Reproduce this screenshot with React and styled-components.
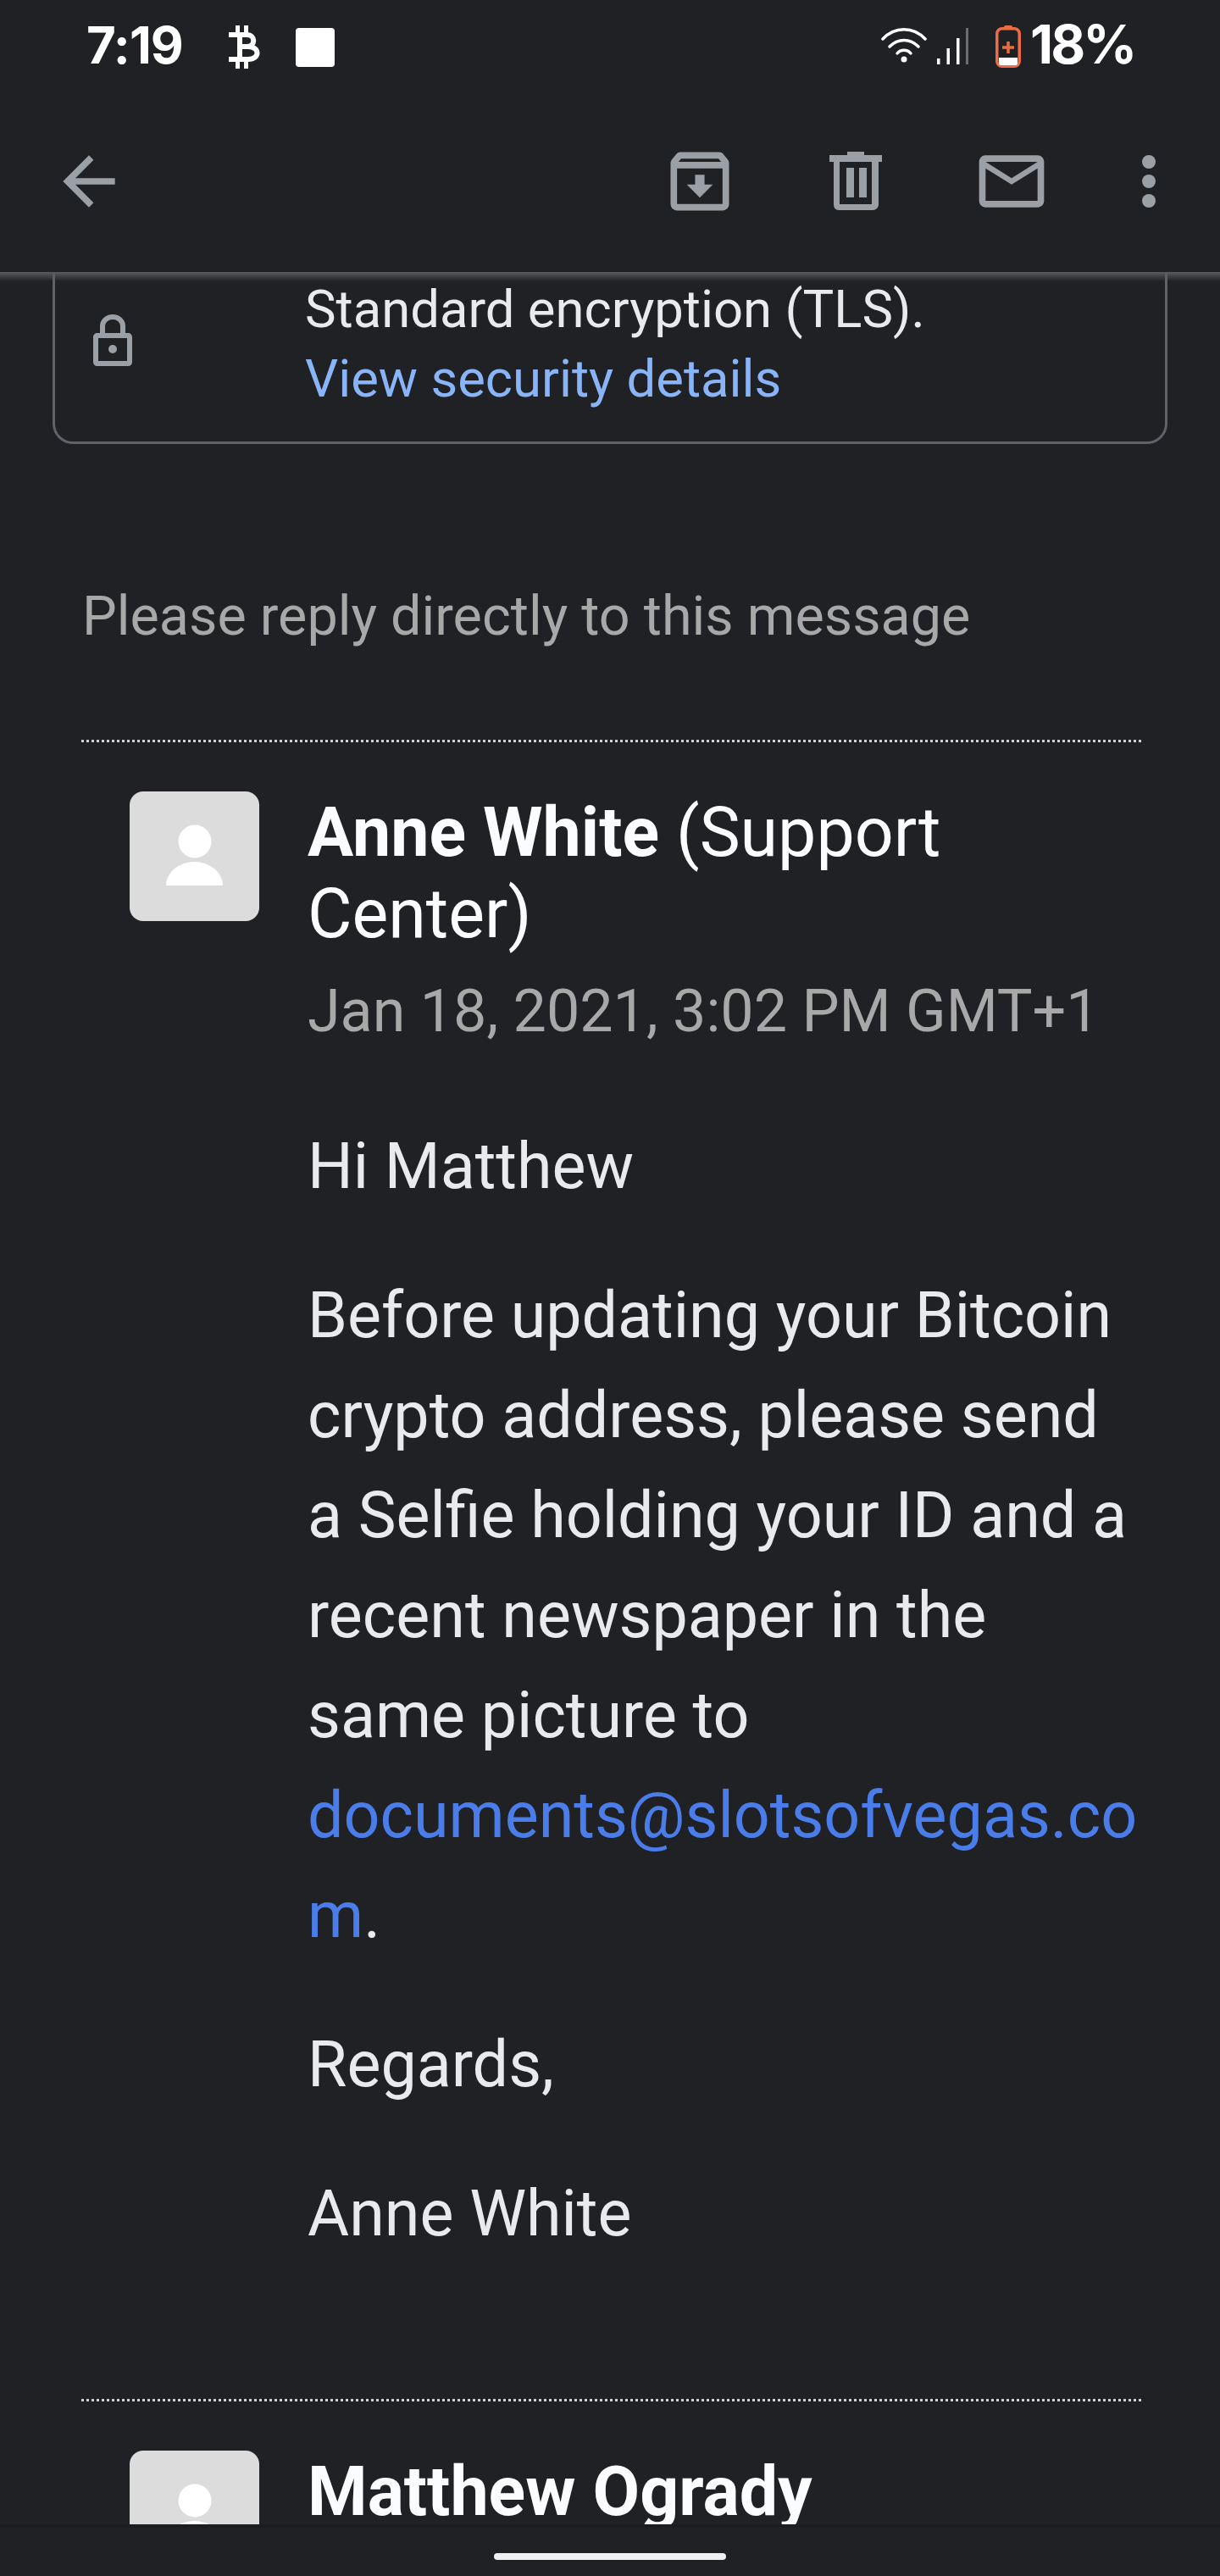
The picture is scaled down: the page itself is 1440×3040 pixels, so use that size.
import React from "react";
import styled, { createGlobalStyle } from "styled-components";

const GlobalStyle = createGlobalStyle`
  html, body {
    margin: 0;
    padding: 0;
    background: #202124;
  }
  * { box-sizing: border-box; }
`;

const Page = styled.div`
  width: 1440px;
  height: 3040px;
  display: flex;
  flex-direction: column;
  overflow: hidden;
  background: #202124;
  font-family: Roboto, "Liberation Sans", sans-serif;
`;

const StatusBar = styled.div`
  flex: none;
  height: 105px;
  padding: 0 103px 0 102px;
  display: flex;
  align-items: center;
  justify-content: space-between;
  color: #fff;
`;

const StatusGroup = styled.div`
  display: flex;
  align-items: center;
`;

const StatusText = styled.span`
  flex: none;
  width: ${(p) => p.$w}px;
  margin: 0 ${(p) => p.$after || 0}px 0 ${(p) => p.$before || 0}px;
  font-family: Inter, Roboto, sans-serif;
  font-size: ${(p) => p.$size}px;
  font-weight: 700;
  line-height: 1;
  letter-spacing: ${(p) => p.$track}px;
  white-space: nowrap;
`;

const StatusIcon = styled.svg`
  display: block;
  flex: none;
  margin: ${(p) => p.$drop || 0}px ${(p) => p.$after || 0}px 0 0;
`;

const StatusSquare = styled.span`
  width: 46px;
  height: 46px;
  margin-top: 7px;
  border-radius: 4px;
  background: #fff;
`;

const Toolbar = styled.div`
  flex: none;
  position: relative;
  height: 217px;
  padding: 0 60px 0 59px;
  display: flex;
  align-items: center;
  gap: 92px;
  color: #9aa0a6;

  &::after {
    content: "";
    position: absolute;
    left: 0;
    right: 0;
    top: calc(100% - 1px);
    height: 11px;
    background: linear-gradient(#5a5c60, rgba(32, 33, 36, 0));
  }
`;

const ToolIcon = styled.svg`
  display: block;
  flex: none;
  width: ${(p) => p.$w || 92}px;
  height: 92px;
  fill: currentColor;
  ${(p) => p.$push && "margin-right: auto;"}
`;

const Scroller = styled.main`
  flex: 1;
  min-height: 0;
  overflow: hidden;
`;

const SecurityBox = styled.section`
  height: 202px;
  margin: 0 62px;
  padding: 0 0 0 45px;
  display: flex;
  border: 3px solid #5f6368;
  border-top: 0;
  border-radius: 0 0 24px 24px;
`;

const LockIcon = styled.svg`
  flex: none;
  width: 46px;
  height: 61px;
  margin: 49px 204px 0 0;
`;

const SecurityText = styled.div`
  padding-top: 2px;
  font-size: 61.6px;
  line-height: 82px;
  color: #e8eaed;
`;

const SecurityLink = styled.div`
  color: #8ab4f8;
`;

const ReplyNote = styled.p`
  margin: 162px 0 0 97px;
  font-size: 64.7px;
  line-height: 82px;
  color: #a8a8a8;
`;

const Message = styled.article`
  margin: ${(p) => p.$top}px 92px 0 96px;
  padding: 61px 0 0 57px;
  display: flex;
  gap: 57px;
  background: repeating-linear-gradient(90deg, #d0d0d0 0 3px, transparent 3px 6px) top left / 100% 3px no-repeat;
`;

const Avatar = styled.svg`
  flex: none;
  display: block;
  width: 153px;
  height: 153px;
  border-radius: 16px;
  background: #dcdcdc;
`;

const MessageMain = styled.div`
  flex: 1;
  min-width: 0;
`;

const Sender = styled.div`
  padding-top: 1px;
  font-size: 80.7px;
  line-height: 96px;
  color: #fafcff;
`;

const SenderName = styled.strong`
  font-weight: 700;
`;

const Sent = styled.div`
  margin-top: 18px;
  font-size: 70px;
  line-height: 96px;
  color: #a8a8a8;
`;

const BodyBlock = styled.p`
  margin: ${(p) => p.$top || 58}px 0 0;
  font-size: 75.4px;
  line-height: 118px;
  color: #e8eaed;
  overflow-wrap: anywhere;
`;

const MailLink = styled.span`
  color: #4a7dea;
`;

const NavBar = styled.div`
  flex: none;
  height: 61px;
  padding-top: 30px;
  display: flex;
  justify-content: center;
  border-top: 4px solid #1c1d20;
  background: #202124;
`;

const NavHandle = styled.div`
  width: 274px;
  height: 8px;
  border-radius: 4px;
  background: #f0f0f0;
`;

const PersonIcon = () => (
  <Avatar viewBox="0 0 153 153">
    <circle cx="77" cy="59" r="19.5" fill="#fff" />
    <path d="M43 111a33.500 28 0 0 1 67 0z" fill="#fff" />
  </Avatar>
);

export default function App() {
  return (
    <Page>
      <GlobalStyle />
      <StatusBar>
        <StatusGroup>
          <StatusText $w={116} $size={60} $track={-1} $after={52}>7:19</StatusText>
          <StatusIcon $drop={6} $after={41} width="38" height="51" viewBox="0 0 38 51" fill="none" stroke="#fff" strokeWidth="6">
            <path d="M10.500 0v9M20.500 0v9M10.500 42v9M20.500 42v9" strokeWidth="5" />
            <path d="M0 11h21c11 0 11 14 0 14H13m0 0h10c14 0 14 15 0 15H0M13 11v29" />
          </StatusIcon>
          <StatusSquare />
        </StatusGroup>
        <StatusGroup>
          <StatusIcon $drop={1} $after={12} width="54" height="41" viewBox="0 0 54 41" fill="none" stroke="#fff" strokeWidth="3.500" strokeLinecap="round">
            <path d="M2 13c14-15 36-15 50 0" />
            <path d="M10 22c10-10 24-10 34 0" />
            <path d="M19 30c4-5 12-5 16 0" />
            <circle cx="27" cy="37" r="3.500" fill="#fff" stroke="none" />
          </StatusIcon>
          <StatusIcon $drop={4} $after={32} width="37" height="43" viewBox="0 0 37 43">
            <rect x="0" y="36" width="3.500" height="7" fill="#fff" />
            <rect x="11.500" y="24" width="3.500" height="19" fill="#fff" />
            <rect x="23" y="12" width="3.500" height="31" fill="#fff" />
            <rect x="34" y="0" width="3.500" height="43" fill="#6b6d70" />
          </StatusIcon>
          <StatusIcon $drop={5} $after={11} width="30" height="50" viewBox="0 0 30 50">
            <rect x="10" y="0" width="10" height="5" rx="2" fill="#ee6c43" />
            <rect x="1.750" y="3.750" width="26.500" height="44.500" rx="6" fill="none" stroke="#ee6c43" strokeWidth="3.500" />
            <path d="M4 38h22v7a2 2 0 0 1-2 2H6a2 2 0 0 1-2-2z" fill="#fff" />
            <path d="M15 19v14M8 26h14" stroke="#ee6c43" strokeWidth="3.500" />
          </StatusIcon>
          <StatusText $w={121} $size={63} $track={-3}>18%</StatusText>
        </StatusGroup>
      </StatusBar>

      <Toolbar>
        <ToolIcon viewBox="0 0 24 24" $push>
          <path d="M20 11H7.830l5.590-5.590L12 4l-8 8 8 8 1.410-1.410L7.830 13H20v-2z" />
        </ToolIcon>
        <ToolIcon viewBox="0 0 24 24">
          <path d="M20.540 5.230l-1.390-1.680C18.880 3.210 18.470 3 18 3H6c-.47 0-.88.21-1.160.55L3.460 5.230C3.170 5.570 3 6.020 3 6.500V19c0 1.100.9 2 2 2h14c1.100 0 2-.9 2-2V6.500c0-.48-.17-.93-.46-1.270zM6.240 5h11.520l.81.97H5.440l.8-.97zM5 19V8h14v11H5zm8.450-9h-2.900v3H8l4 4 4-4h-2.550z" />
        </ToolIcon>
        <ToolIcon viewBox="-15 -11 92 92">
          <path d="M21 0h20v4h21v8h-4v50c0 4-3 7-7 7H11c-4 0-6-3-6-7V12H0V4h21zM12 12v50h38V12zM20 19h9v35h-9zM35 19h9v35h-9z" fillRule="evenodd" />
        </ToolIcon>
        <ToolIcon viewBox="0 0 24 24">
          <path d="M22 6c0-1.100-.9-2-2-2H4c-1.100 0-2 .9-2 2v12c0 1.100.9 2 2 2h16c1.100 0 2-.9 2-2V6zm-2 0l-8 5-8-5h16zm0 12H4V8l8 5 8-5v10z" />
        </ToolIcon>
        <ToolIcon viewBox="0 0 48 92" $w={48}>
          <circle cx="24" cy="23" r="8" />
          <circle cx="24" cy="46" r="8" />
          <circle cx="24" cy="69" r="8" />
        </ToolIcon>
      </Toolbar>

      <Scroller>
        <SecurityBox>
          <LockIcon viewBox="0 0 46 61" fill="#9aa0a6">
            <path fillRule="evenodd" d="M8 22v-8a15 14 0 0 1 30 0v8h3c3 0 5 2 5 5v29c0 3-2 5-5 5H5c-3 0-5-2-5-5V27c0-3 2-5 5-5zM14 22h18v-8a9 8 0 0 0-18 0zM6 28v27h34V28z" />
            <circle cx="23" cy="41" r="5" />
          </LockIcon>
          <SecurityText>
            Standard encryption (TLS).
            <SecurityLink>View security details</SecurityLink>
          </SecurityText>
        </SecurityBox>

        <ReplyNote>Please reply directly to this message</ReplyNote>

        <Message $top={105}>
          <PersonIcon />
          <MessageMain>
            <Sender>
              <SenderName>Anne White</SenderName> (Support Center)
            </Sender>
            <Sent>Jan 18, 2021, 3:02 PM GMT+1</Sent>
            <BodyBlock $top={76}>Hi Matthew</BodyBlock>
            <BodyBlock $top={58}>
              Before updating your Bitcoin crypto address, please send a Selfie holding your ID and a recent newspaper in the same picture to <MailLink>documents@slotsofvegas.com</MailLink>.
            </BodyBlock>
            <BodyBlock>Regards,</BodyBlock>
            <BodyBlock>Anne White</BodyBlock>
          </MessageMain>
        </Message>

        <Message $top={160}>
          <PersonIcon />
          <MessageMain>
            <Sender>
              <SenderName>Matthew Ogrady</SenderName>
            </Sender>
          </MessageMain>
        </Message>
      </Scroller>

      <NavBar>
        <NavHandle />
      </NavBar>
    </Page>
  );
}
